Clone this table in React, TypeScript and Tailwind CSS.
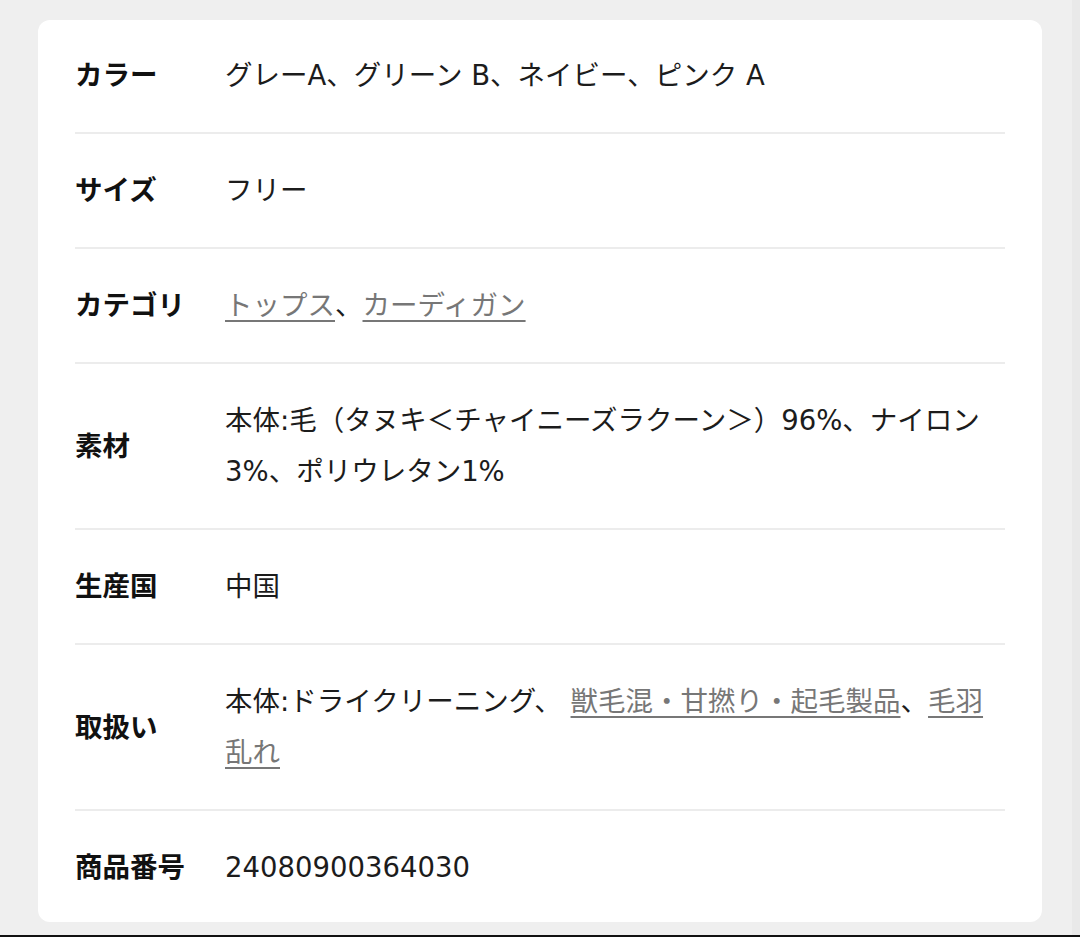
import { ReactNode } from 'react'

const font = { fontFamily: '"DejaVu Sans", "Noto Sans CJK JP", sans-serif' }

function L({ children }: { children: ReactNode }) {
  return (
    <a href="#" className="text-[#777] underline decoration-[1.5px] underline-offset-[5px]">
      {children}
    </a>
  )
}

const rows: { label: string; value: ReactNode }[] = [
  { label: 'カラー', value: 'グレーA、グリーン B、ネイビー、ピンク A' },
  { label: 'サイズ', value: 'フリー' },
  {
    label: 'カテゴリ',
    value: (
      <>
        <L>トップス</L>、<L>カーディガン</L>
      </>
    ),
  },
  { label: '素材', value: '本体:毛（タヌキ＜チャイニーズラクーン＞）96%、ナイロン3%、ポリウレタン1%' },
  { label: '生産国', value: '中国' },
  {
    label: '取扱い',
    value: (
      <>
        本体:ドライクリーニング、 <L>獣毛混・甘撚り・起毛製品</L>、<L>毛羽乱れ</L>
      </>
    ),
  },
  { label: '商品番号', value: '24080900364030' },
]

export default function App() {
  return (
    <div className="flex h-[937px] flex-col bg-[#efefef]" style={font}>
      <div className="flex flex-1">
        <div className="flex-1 pl-[38px] pt-[20px] pr-[30px]">
          <div className="rounded-[12px] bg-white px-[37px]">
            {rows.map((r, i) => (
              <div
                key={r.label}
                className={`flex items-center py-[31px] text-[27.5px] leading-[51px] ${
                  i < rows.length - 1 ? 'border-b-2 border-[#ececec]' : ''
                } ${i === 0 ? 'pt-[30px]' : ''} ${i === rows.length - 1 ? 'pb-[29px]' : ''}`}
              >
                <div className="w-[150px] shrink-0 font-bold text-[#111]">{r.label}</div>
                <div className="flex-1 text-[#1c1c1c]">{r.value}</div>
              </div>
            ))}
          </div>
        </div>
        <div className="w-[8px] bg-[#e9e9e9]" />
      </div>
      <div className="h-[2px] bg-[#111]" />
    </div>
  )
}
